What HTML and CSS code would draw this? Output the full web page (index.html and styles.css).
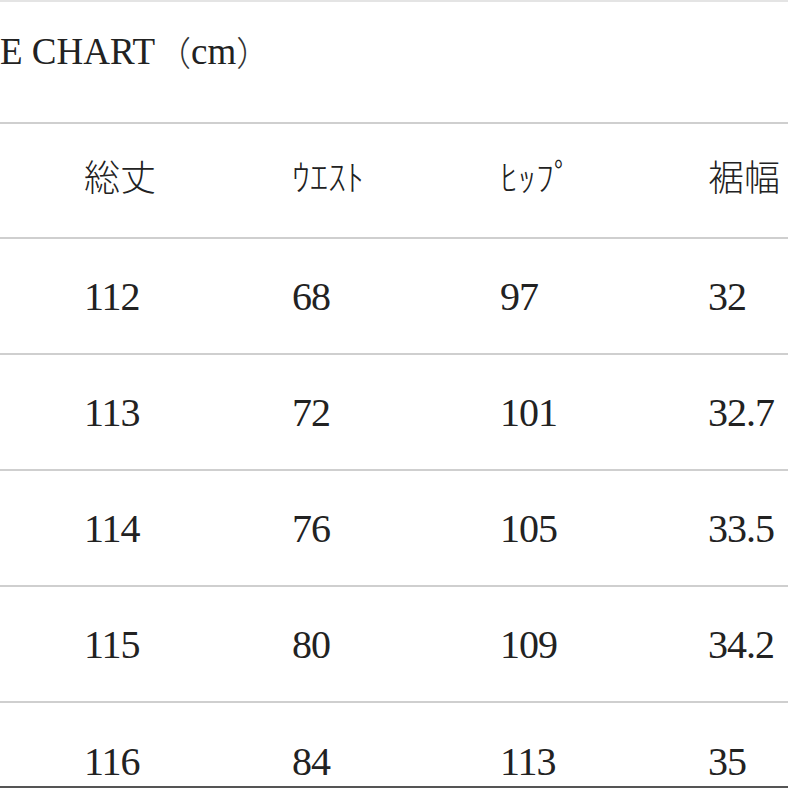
FILE: index.html
```html
<!DOCTYPE html>
<html lang="ja">
<head>
<meta charset="utf-8">
<link rel="stylesheet" href="styles.css">
</head>
<body>
<div class="chart">
  <div class="title"><span class="title-text">E CHART</span><span class="paren">（</span><span class="unit">cm</span><span class="paren">）</span></div>
  <div class="row head">
    <div class="cell jp">総丈</div>
    <div class="cell jp">ｳｴｽﾄ</div>
    <div class="cell jp">ﾋｯﾌﾟ</div>
    <div class="cell jp">裾幅</div>
  </div>
  <div class="row">
    <div class="cell">112</div><div class="cell">68</div><div class="cell">97</div><div class="cell">32</div>
  </div>
  <div class="row">
    <div class="cell">113</div><div class="cell">72</div><div class="cell">101</div><div class="cell">32.7</div>
  </div>
  <div class="row">
    <div class="cell">114</div><div class="cell">76</div><div class="cell">105</div><div class="cell">33.5</div>
  </div>
  <div class="row">
    <div class="cell">115</div><div class="cell">80</div><div class="cell">109</div><div class="cell">34.2</div>
  </div>
  <div class="row last">
    <div class="cell">116</div><div class="cell">84</div><div class="cell">113</div><div class="cell">35</div>
  </div>
</div>
</body>
</html>
```
FILE: styles.css
```css
html, body {
  margin: 0;
  padding: 0;
  background: #ffffff;
  overflow: hidden;
}
body {
  width: 788px;
  height: 788px;
  font-family: "Liberation Serif", "Noto Sans CJK JP", serif;
  color: #222222;
  border-top: 2px solid #e4e4e4;
  box-sizing: border-box;
  position: relative;
}
.chart {
  display: flex;
  flex-direction: column;
}
.title {
  height: 122px;
  border-bottom: 2px solid #cfcfcf;
  display: flex;
  align-items: center;
  padding-bottom: 22px;
  box-sizing: border-box;
  font-size: 37px;
  white-space: nowrap;
}
.paren {
  font-family: "Noto Sans CJK JP", sans-serif;
  font-weight: 300;
  font-size: 34px;
  color: #333;
}
.title-text {
  margin-right: 2px;
}
.row {
  display: grid;
  grid-template-columns: 208px 208px 208px 1fr;
  padding-left: 84px;
  height: 116px;
  box-sizing: border-box;
  border-bottom: 2px solid #cfcfcf;
  align-items: center;
  font-size: 40px;
  letter-spacing: -1px;
}
.row.head {
  padding-bottom: 12px;
  height: 115px;
}
.row.last {
  border-bottom: none;
}
.cell {
  white-space: nowrap;
}
.jp {
  font-family: "Noto Sans CJK JP", sans-serif;
  font-size: 36px;
  font-weight: 300;
  letter-spacing: 0;
}
body::after {
  content: "";
  position: absolute;
  left: 0;
  right: 0;
  bottom: 0;
  height: 2px;
  background: #555;
}
```
